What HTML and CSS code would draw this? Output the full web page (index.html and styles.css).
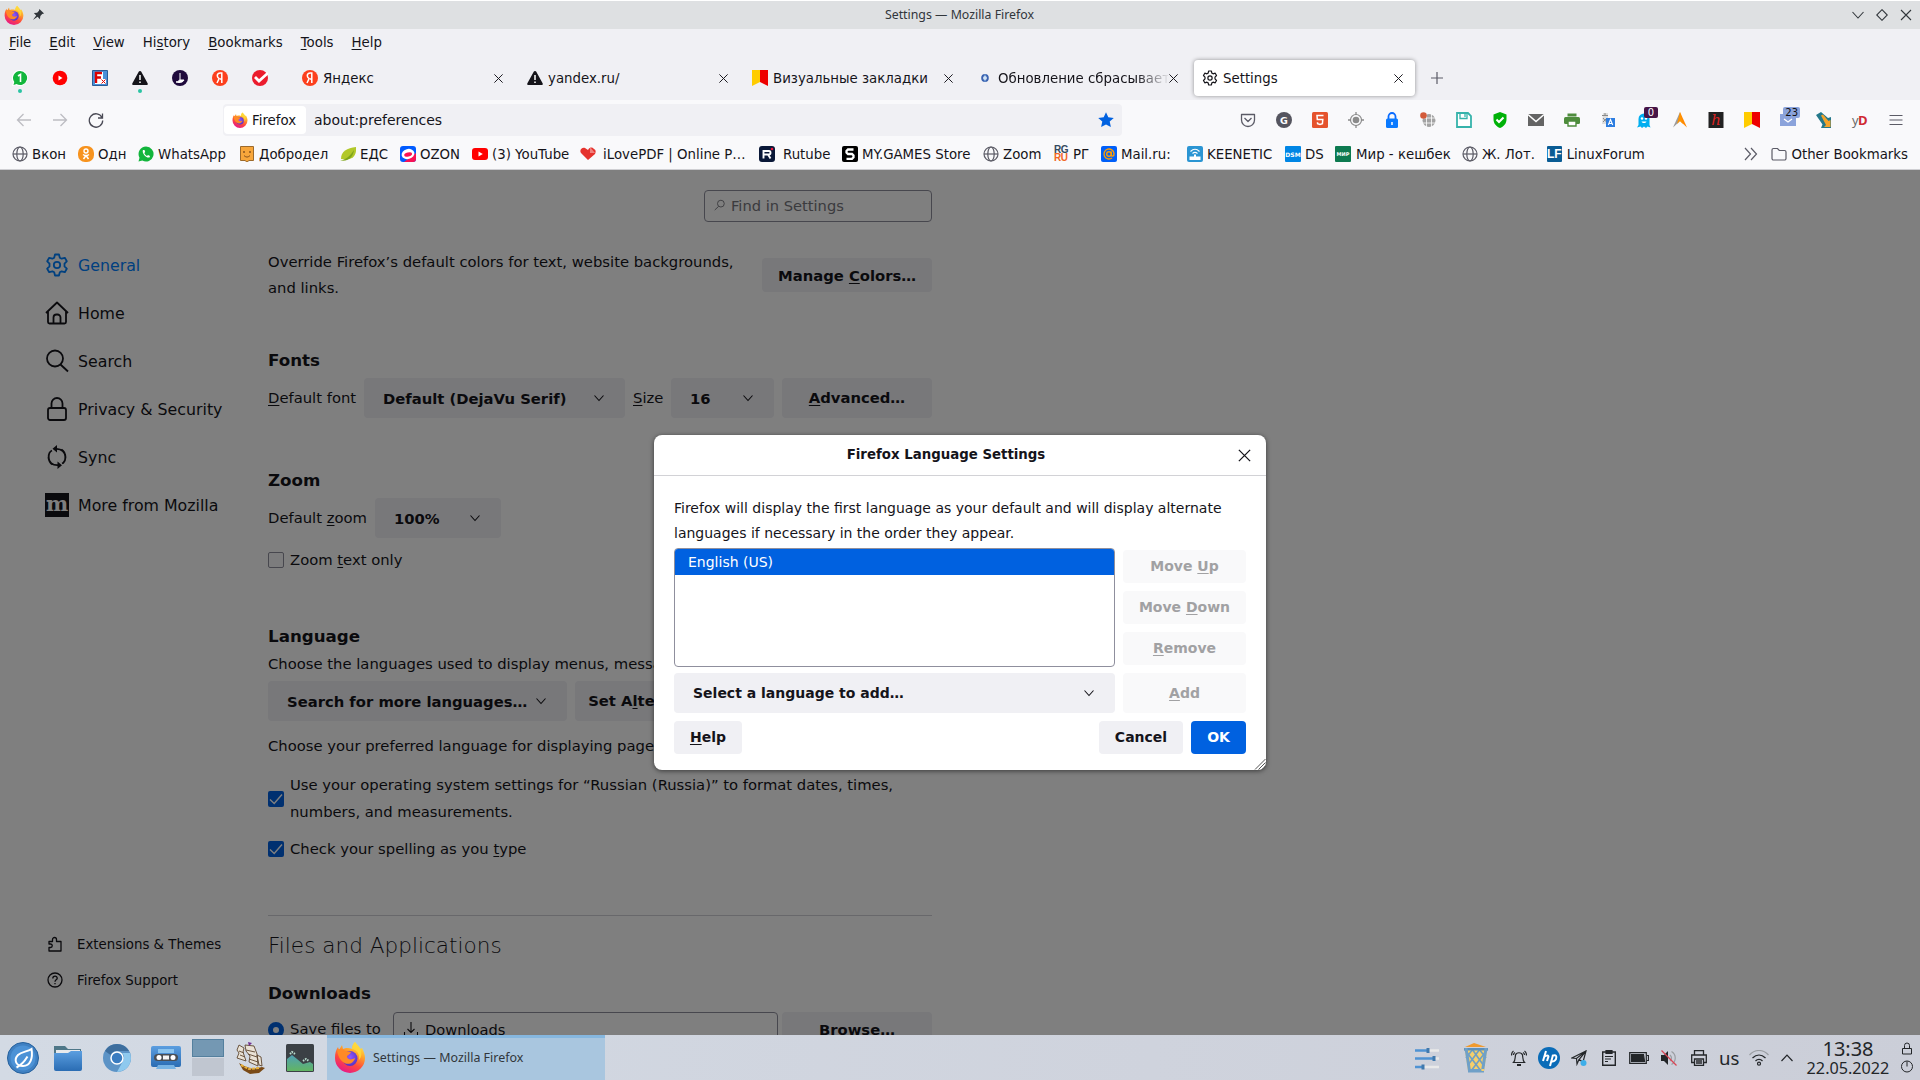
FILE: index.html
```html
<!DOCTYPE html>
<html lang="en">
<head>
<meta charset="utf-8">
<title>Settings — Mozilla Firefox</title>
<link rel="stylesheet" href="styles.css">
</head>
<body>
<svg class="defs" width="0" height="0">
  <defs>
    <linearGradient id="flame" x1="0.8" y1="0" x2="0.3" y2="1"><stop offset="0" stop-color="#fff44f"/><stop offset=".35" stop-color="#ffa22a"/><stop offset=".65" stop-color="#ff4a3d"/><stop offset="1" stop-color="#e5158c"/></linearGradient>
    <radialGradient id="globe" cx=".5" cy=".4" r=".7"><stop offset="0" stop-color="#9059ff"/><stop offset="1" stop-color="#4b2bb8"/></radialGradient>
    <linearGradient id="blue" x1="0" y1="0" x2="0" y2="1"><stop offset="0" stop-color="#5b9ee0"/><stop offset="1" stop-color="#2a6cb3"/></linearGradient>
    <linearGradient id="green" x1="0" y1="0" x2="0" y2="1"><stop offset="0" stop-color="#4f9fb5"/><stop offset="1" stop-color="#62b562"/></linearGradient>
    <symbol id="fx" viewBox="0 0 32 32">
      <path d="M21 1c2 3 4 4 5 7l2-1c2 4 3 7 3 10a15 15 0 0 1-30 0C1 12 2 9 4 6l1 3 3-5 1 4 3-1c3 0 5 0 6 1 0-3 1-5 3-7z" fill="url(#flame)"/>
      <circle cx="16" cy="17.500" r="7.500" fill="url(#globe)"/>
      <path d="M3 9c3-2 6-1 8 1l6 1c-1 3-4 3-4 5 1 3 5 3 8 1-1 5-7 8-12 4C5 18 4 14 3 9z" fill="#ff8a26"/>
      <path d="M18 8c5 1 8 5 7 11 3-3 3-8 1-12l-5-6c-2 2-3 4-3 7z" fill="#ffd83a" opacity=".85"/>
    </symbol>
    <symbol id="x" viewBox="0 0 12 12"><path d="M1.500 1.500l9 9M10.500 1.500l-9 9" fill="none" stroke="currentColor" stroke-width="1.050"/></symbol>
    <symbol id="chev" viewBox="0 0 12 12"><path d="M1.500 3.500L6 8.500l4.500-5" fill="none" stroke="currentColor" stroke-width="1.100"/></symbol>
    <symbol id="world" viewBox="0 0 16 16"><g fill="none" stroke="#5b5b66" stroke-width="1.200"><circle cx="8" cy="8" r="7"/><ellipse cx="8" cy="8" rx="3.200" ry="7"/><path d="M1 8h14"/></g></symbol>
    <symbol id="ya" viewBox="0 0 16 16"><circle cx="8" cy="8" r="8" fill="#fc3f1d"/><path d="M9.800 13V3H8.300C6.500 3 5.300 4.200 5.300 5.800c0 1.300.6 2 1.800 2.900L5 13M9.800 9H8" fill="none" stroke="#fff" stroke-width="1.500"/></symbol>
    <symbol id="warn" viewBox="0 0 16 16"><path d="M8 1c.7 0 1 .3 1.300.8l6.300 11.400c.6 1-.1 1.800-1 1.800H1.400c-.9 0-1.600-.8-1-1.800L6.700 1.800C7 1.300 7.300 1 8 1z" fill="#15141a"/><path d="M8 5v5M8 11.500v1.500" stroke="#fff" stroke-width="1.500"/></symbol>
    <symbol id="flag" viewBox="0 0 16 16"><path d="M0 0h8v12L0 16z" fill="#fc0"/><path d="M8 0h8v16l-8-4z" fill="#e00"/></symbol>
    <symbol id="gear" viewBox="0 0 24 24"><g fill="none" stroke="currentColor" stroke-width="1.800" stroke-linejoin="round"><path d="M10 1.500h4l.8 3.200 1.800 1 3.200-.9 2 3.500-2.300 2.300v2.800l2.300 2.300-2 3.500-3.200-.9-1.800 1-.8 3.200h-4l-.8-3.200-1.800-1-3.200.9-2-3.500 2.300-2.300v-2.800L2.200 8.300l2-3.500 3.200.9 1.800-1z"/><circle cx="12" cy="12" r="3.200"/></g></symbol>
    <symbol id="check" viewBox="0 0 16 16"><path d="M2 8.500l4.200 4L14 3.500" fill="none" stroke="#fff" stroke-width="1.400"/></symbol>
  </defs>
</svg>

<header class="titlebar">
  <svg class="i20"><use href="#fx"/></svg>
  <svg class="pin" viewBox="0 0 14 14"><path d="M8 1l5 5-2 .5-2 2L8.500 12 6 9.500 1 13l3.500-5L2 5.500l3.500-.5 2-2z" fill="#31363b"/></svg>
  <span class="win-title">Settings — Mozilla Firefox</span>
  <div class="win-buttons">
    <svg viewBox="0 0 12 12"><path d="M.5 3L6 9l5.500-6"/></svg>
    <svg viewBox="0 0 12 12"><path d="M6 .7L11.300 6 6 11.300.7 6z"/></svg>
    <svg viewBox="0 0 12 12"><path d="M1 1l10 10M11 1L1 11"/></svg>
  </div>
</header>

<nav class="menubar">
  <span><u>F</u>ile</span><span><u>E</u>dit</span><span><u>V</u>iew</span><span>Hi<u>s</u>tory</span><span><u>B</u>ookmarks</span><span><u>T</u>ools</span><span><u>H</u>elp</span>
</nav>

<div class="tabs">
  <div class="pins">
    <div class="pinned dot"><svg viewBox="0 0 16 16"><path d="M8 0a8 8 0 1 1-4 15L0 16l1-4A8 8 0 0 1 8 0z" fill="#fff"/><path d="M8 1a7 7 0 1 1-3.500 13L1.500 15l.8-3A7 7 0 0 1 8 1z" fill="#12b63c"/><path d="M6 6l2.500-1.500V12" fill="none" stroke="#fff" stroke-width="1.600"/></svg></div>
    <div class="pinned"><svg viewBox="0 0 16 16"><circle cx="8" cy="8" r="7.300" fill="#f00"/><path d="M6.500 5.500v5L10.500 8z" fill="#fff"/></svg></div>
    <div class="pinned"><svg viewBox="0 0 16 16"><path d="M.5.500h15v15H.5z" fill="#4a90d9" stroke="#2a5c96"/><path d="M3 2h8v12H3z" fill="#fff"/><path d="M4 13V3h6M4 7.500h5" fill="none" stroke="#d00" stroke-width="2.400"/><path d="M9 9h5v5H9z" fill="#fff"/><path d="M9.500 9.500l4 4M13.500 9.500l-4 4" stroke="#d00"/></svg></div>
    <div class="pinned dot"><svg><use href="#warn"/></svg></div>
    <div class="pinned"><svg viewBox="0 0 16 16"><circle cx="8" cy="8" r="8" fill="#1f0a3c"/><path d="M8 3v7M4 12c2 0 3-2 4-2h4c-1 2-3 2.500-5 2.500z" fill="#fff" stroke="#fff"/></svg></div>
    <div class="pinned"><svg><use href="#ya"/></svg></div>
    <div class="pinned"><svg viewBox="0 0 16 16"><circle cx="8" cy="8" r="8" fill="#eb1c2d"/><path d="M3 7l4 4 9-8" fill="none" stroke="#fff" stroke-width="2.800"/></svg></div>
  </div>
  <div class="tab"><svg class="i16"><use href="#ya"/></svg><span>Яндекс</span><svg class="close"><use href="#x"/></svg></div>
  <div class="tab"><svg class="i16"><use href="#warn"/></svg><span>yandex.ru/</span><svg class="close"><use href="#x"/></svg></div>
  <div class="tab"><svg class="i16"><use href="#flag"/></svg><span>Визуальные закладки</span><svg class="close"><use href="#x"/></svg></div>
  <div class="tab"><svg class="i16" viewBox="0 0 16 16"><ellipse cx="8" cy="8" rx="2.800" ry="3" fill="#fff" stroke="#3a62b0" stroke-width="2"/><path d="M8 4.500v7" stroke="#9cc8ee"/></svg><span class="fade">Обновление сбрасывает</span><svg class="close"><use href="#x"/></svg></div>
  <div class="tab active"><svg class="i16"><use href="#gear"/></svg><span>Settings</span><svg class="close"><use href="#x"/></svg></div>
  <svg class="plus" viewBox="0 0 12 12"><path d="M6 0v12M0 6h12" stroke="#5b5b66" stroke-width="1.200"/></svg>
</div>

<div class="navbar">
  <div class="nav-buttons">
    <svg class="dim" viewBox="0 0 16 16"><path d="M15 8H1.500M7.500 2l-6 6 6 6"/></svg>
    <svg class="dim" viewBox="0 0 16 16"><path d="M1 8h13.500M8.500 2l6 6-6 6"/></svg>
    <svg viewBox="0 0 16 16"><path d="M14 5.500A6.700 6.700 0 1 0 14.700 8.500M14.500 1.500v4.500H10"/></svg>
  </div>
  <div class="urlbar">
    <div class="identity"><svg class="i16"><use href="#fx"/></svg>Firefox</div>
    <span class="url">about:preferences</span>
    <svg class="star" viewBox="0 0 16 16"><path d="M8 .3l2.300 5 5.500.6-4.100 3.700 1.200 5.500L8 12.400l-4.900 2.700 1.200-5.500L.2 5.900l5.500-.6z" fill="#0061e0"/></svg>
  </div>
  <div class="ext">
    <svg viewBox="0 0 16 16"><path d="M1.500 2.500h13V8a6.500 6.500 0 0 1-13 0zM4.500 6L8 9.500 11.500 6" fill="none" stroke="#5b5b66" stroke-width="1.300" stroke-linejoin="round"/></svg>
    <svg viewBox="0 0 16 16"><circle cx="8" cy="8" r="8" fill="#55555f"/><text x="8" y="11.500" class="g-letter">G</text></svg>
    <svg viewBox="0 0 16 16"><rect width="16" height="16" rx="1.500" fill="#e5532d"/><path d="M11.500 3.500H5l.3 4h5.500l-.4 4.200-2.400.8-2.400-.8-.1-1.500" fill="none" stroke="#fff" stroke-width="1.500"/></svg>
    <svg viewBox="0 0 16 16"><circle cx="8" cy="8" r="5.500" fill="none" stroke="#8b8b8b" stroke-width="1.200"/><circle cx="8" cy="8" r="3.300" fill="#8b8b8b"/><path d="M8 0v3M8 13v3M0 8h3M13 8h3" stroke="#8b8b8b" stroke-width="1.300"/></svg>
    <svg viewBox="0 0 16 16"><path d="M4.500 8V4.500a3.500 3.500 0 0 1 7 0V8" fill="none" stroke="#0a6cff" stroke-width="1.800"/><rect x="2" y="6.500" width="12" height="9.500" rx="1.500" fill="#0a7aff"/><path d="M8 10v3" stroke="#fff" stroke-width="1.500"/></svg>
    <svg viewBox="0 0 16 16"><circle cx="9" cy="8.500" r="6.500" fill="#a3a3a3"/><path d="M2 6h14M2 11h14M6.500 2v13M11.500 2v13" stroke="#fff" stroke-width=".8"/><circle cx="3.500" cy="3.500" r="3.300" fill="#d35b3a"/></svg>
    <svg viewBox="0 0 16 16"><path d="M1 1h11l3 3v11H1z" fill="#fff" stroke="#36b3ab" stroke-width="1.800"/><path d="M4 1v5.500h7V1M9 2v3" fill="none" stroke="#36b3ab" stroke-width="1.300"/></svg>
    <svg viewBox="0 0 16 16"><path d="M8 0l6.500 2.500V7c0 5-3 7.500-6.500 9-3.500-1.500-6.500-4-6.500-9V2.500z" fill="#00b208"/><path d="M4.500 7.500L7 10l4.500-4.500" fill="none" stroke="#fff" stroke-width="2"/></svg>
    <svg viewBox="0 0 16 16"><path d="M0 2h16v12H0z" fill="#646464"/><path d="M0 2.500l8 7 8-7" fill="none" stroke="#fff" stroke-width="1.500"/></svg>
    <svg viewBox="0 0 16 16"><path d="M3.500 1.500h9v3h-9z" fill="#4e8c3c"/><rect y="5" width="16" height="7" rx="1.500" fill="#4e8c3c"/><path d="M4 9h8v5H4z" fill="#fff" stroke="#4e8c3c" stroke-width="1.400"/></svg>
    <svg viewBox="0 0 16 16"><path d="M3 1h5v11H2z" fill="#ddd"/><path d="M2 3.500h6M5 1v3M3 6l3.500 4M7 6l-4 4" stroke="#888" stroke-width="1"/><path d="M6 6h9v9H6z" fill="#2d7de0"/><path d="M8.300 13l2.200-5.500 2.200 5.500M9 11.500h3" fill="none" stroke="#fff" stroke-width="1.100"/></svg>
    <span class="badged"><svg viewBox="0 0 16 16"><path d="M2.500 7a5.500 5.500 0 0 1 11 0v6l1 2.500-3-1L10 16l-2-1.500L6 16l-1.500-1.500-3.500 1 1.500-2.500z" fill="#00aef0"/><circle cx="6" cy="6.500" r="1.200" fill="#fff"/><circle cx="10" cy="6.500" r="1.200" fill="#fff"/><path d="M5.500 9.500c1 2 4 2 5 0" fill="#fff"/></svg><b class="badge plum">0</b></span>
    <svg viewBox="0 0 16 16"><path d="M8 0l7 15.500-7-6.500z" fill="#f80"/><path d="M8 0L1 15.500 8 9z" fill="#9b9b9b"/><path d="M8 0l-3 12 3-3 3 3z" fill="#ff9400"/></svg>
    <svg viewBox="0 0 16 16"><path d="M.5 0h15v16H.5z" fill="#222"/><text x="8" y="13" class="h-letter">h</text></svg>
    <svg><use href="#flag"/></svg>
    <span class="badged"><svg viewBox="0 0 16 16"><path d="M0 2h16v12H0z" fill="#8ba3db"/><path d="M4 7l4 3 4-3" fill="none" stroke="#fff" stroke-width="1.300"/></svg><b class="badge sky">23</b></span>
    <svg viewBox="0 0 16 16"><path d="M0 3l5-3 7 6 3-1v11H5l1.500-3.500z" fill="#24788a"/><path d="M5 3.500l2-1 5.500 6.500 2-1v7H8l2-2z" fill="#f3a32a"/></svg>
    <span class="yd">y<b>D</b></span>
    <svg viewBox="0 0 16 16"><path d="M1.500 3.500h13M1.500 8h13M1.500 12.500h13" stroke="#5b5b66" stroke-width="1.200"/></svg>
  </div>
</div>

<div class="bookmarks">
  <div class="bm"><svg><use href="#world"/></svg>Вкон</div>
  <div class="bm"><svg viewBox="0 0 16 16"><rect width="16" height="16" rx="7" fill="#f7931e"/><circle cx="8" cy="5" r="2" fill="none" stroke="#fff" stroke-width="1.400"/><path d="M5 8.500c2 1.500 4 1.500 6 0M8 9.500L5.500 13M8 9.500l2.500 3.500" fill="none" stroke="#fff" stroke-width="1.500"/></svg>Одн</div>
  <div class="bm"><svg viewBox="0 0 16 16"><path d="M8 .5a7.500 7.500 0 1 1-3.700 14L.5 15.500l1-3.800A7.500 7.500 0 0 1 8 .5z" fill="#12b53c"/><path d="M5 4c-1.500 3 3 8.500 6.500 7.500l.5-1.500-2-1-1 1C8 9.500 6.500 8 6.300 7l.9-1-.7-2z" fill="#fff"/></svg>WhatsApp</div>
  <div class="bm"><svg viewBox="0 0 16 16"><path d="M1.500.500h13v14H10l-2 1.500-2-1.500H1.500z" fill="#f7a63b" stroke="#9c6a2c"/><circle cx="5" cy="6" r=".9" fill="#7d4b1a"/><circle cx="11" cy="6" r=".9" fill="#7d4b1a"/><path d="M5 9.500c2 2 4 2 6 0" fill="none" stroke="#7d4b1a"/></svg>Добродел</div>
  <div class="bm"><svg viewBox="0 0 16 16"><path d="M16 1c1 10-5 14-15 12C1 5 7 2 16 1z" fill="#b2c82a"/><path d="M0 15c7-2 10-5 14-11C13 12 8 15 0 15z" fill="#7fa51c"/></svg>ЕДС</div>
  <div class="bm"><svg viewBox="0 0 16 16"><rect width="16" height="16" rx="3" fill="#005bff"/><path d="M16 7v6a3 3 0 0 1-3 3H4z" fill="#f91155"/><ellipse cx="8" cy="8" rx="6.500" ry="5" fill="#fff" transform="rotate(-15 8 8)"/><ellipse cx="8" cy="8.500" rx="4" ry="2" fill="#f91155" transform="rotate(-15 8 8)"/></svg>OZON</div>
  <div class="bm"><svg viewBox="0 0 16 16"><rect y="2" width="16" height="12" rx="3" fill="#f00"/><path d="M6.500 5.500v5L10.800 8z" fill="#fff"/></svg>(3) YouTube</div>
  <div class="bm"><svg viewBox="0 0 16 16"><path d="M8 14L1 7c-2-3 1-6 4-5l3 2c2-3 4-3 6-1 2 1 2 3 1 5z" fill="#e5322d"/><path d="M10 1l5 6h-5z" fill="#f1807d"/></svg>iLovePDF | Online P…</div>
  <div class="bm"><svg viewBox="0 0 16 16"><rect width="16" height="16" rx="3" fill="#0a1838"/><path d="M4.500 12.500V5h5.500c2 0 2 3.500 0 3.500H5M9 8.500l2.500 4" fill="none" stroke="#fff" stroke-width="1.900"/><circle cx="13" cy="3" r="1.300" fill="#ed143b"/></svg>Rutube</div>
  <div class="bm"><svg viewBox="0 0 16 16"><rect width="16" height="16" rx="2" fill="#000"/><path d="M11.500 3.500H6L4.500 5v1.500L6 8h4l1.500 1.500v1.800L10 12.800H4.500" fill="none" stroke="#fff" stroke-width="2.300"/></svg>MY.GAMES Store</div>
  <div class="bm"><svg><use href="#world"/></svg>Zoom</div>
  <div class="bm"><span class="rg"><b>RG</b><b>RU</b></span>РГ</div>
  <div class="bm"><svg viewBox="0 0 16 16"><rect width="16" height="16" rx="2" fill="#005ff9"/><circle cx="8" cy="8" r="2.300" fill="none" stroke="#ff9e00" stroke-width="1.400"/><path d="M10.300 5.500V9c0 1.800 3 1.500 2.700-1.500A5 5 0 1 0 11 12" fill="none" stroke="#ff9e00" stroke-width="1.400"/></svg>Mail.ru:</div>
  <div class="bm"><svg viewBox="0 0 16 16"><rect width="16" height="16" rx="2" fill="#2b95d3"/><path d="M2.500 10.500h11V14h-11z" fill="#fff"/><path d="M3.500 5.500c3-3 6-3 9 0M5.500 7.500c2-1.800 3-1.800 5 0" stroke="#fff" fill="none" stroke-width="1.100"/><path d="M7 8.500h2v3H7z" fill="#fff"/></svg>KEENETIC</div>
  <div class="bm"><span class="dsm">DSM</span>DS</div>
  <div class="bm"><span class="mir">МИР</span>Мир - кешбек</div>
  <div class="bm"><svg><use href="#world"/></svg>Ж. Лот.</div>
  <div class="bm"><span class="lf">LF</span>LinuxForum</div>
  <div class="bm-end">
    <svg class="more" viewBox="0 0 14 14"><path d="M1 1l5.500 6L1 13M7 1l5.500 6L7 13" fill="none" stroke="#5b5b66" stroke-width="1.200"/></svg>
    <svg viewBox="0 0 16 16"><path d="M1 4a1.500 1.500 0 0 1 1.500-1.500h4l1.800 2h5.200A1.500 1.500 0 0 1 15 6v6.500a1.500 1.500 0 0 1-1.500 1.500h-11A1.500 1.500 0 0 1 1 12.500z" fill="none" stroke="#5b5b66" stroke-width="1.200"/></svg>
    <span>Other Bookmarks</span>
  </div>
</div>

<div class="page">
  <aside class="side">
    <div class="cat sel"><svg><use href="#gear"/></svg>General</div>
    <div class="cat"><svg viewBox="0 0 24 24"><path d="M1 12L12 1.500 23 12M3 10.500V21a1.500 1.500 0 0 0 1.500 1.500h15A1.500 1.500 0 0 0 21 21V10.500M8.500 22.500v-6a3 3 0 0 1 3-3h1a3 3 0 0 1 3 3v6" /></svg>Home</div>
    <div class="cat"><svg viewBox="0 0 24 24"><circle cx="10" cy="9.500" r="8"/><path d="M15.500 15.500L23 22.500"/></svg>Search</div>
    <div class="cat"><svg viewBox="0 0 24 24"><rect x="3" y="11" width="18" height="12" rx="2"/><path d="M6.500 11V6.500a5.500 5.500 0 0 1 11 0V11"/></svg>Privacy &amp; Security</div>
    <div class="cat"><svg viewBox="0 0 24 24"><path d="M7.500 19.500C2.500 16.500 2.500 7.500 7 5.500M16.500 4.500c5 3 5 12 .5 14M11 3.800c5.500-.3 9.500 3.500 9.500 8.500 0 2.500-1 4.500-2.500 6M13 20.200c-5.500.3-9.500-3.200-9.500-8.200"/><path class="solid" d="M12 0v7.500L7.500 3.800zM12.500 16.500V24l4.500-3.800z"/></svg>Sync</div>
    <div class="cat"><span class="moz">m</span>More from Mozilla</div>
    <div class="foot">
      <div><svg viewBox="0 0 16 16"><path d="M2 5.500h3.500v-2a2 2 0 0 1 4 0v2H14v9.500H2v-3.500h1.500a1.700 1.700 0 0 0 0-3.500H2z" stroke-linejoin="round"/></svg>Extensions &amp; Themes</div>
      <div><svg viewBox="0 0 16 16"><circle cx="8" cy="8" r="7"/><path d="M5.800 6.500c0-3 4.600-3 4.400-.2C10 8 8 7.800 8 9.800M8 11v1.300"/></svg>Firefox Support</div>
    </div>
  </aside>
  <main class="main">
    <div class="find"><svg viewBox="0 0 12 12"><circle cx="7.500" cy="4.500" r="3.700"/><path d="M5 7.500L.8 11.500"/></svg>Find in Settings</div>
    <div class="row override"><p>Override Firefox’s default colors for text, website backgrounds, and links.</p><div class="btn">Manage&nbsp;<u>C</u>olors…</div></div>
    <h2 class="h-fonts">Fonts</h2>
    <div class="row"><span class="lbl"><u>D</u>efault font</span><div class="sel-box w-font">Default (DejaVu Serif)<svg><use href="#chev"/></svg></div><span class="lbl size"><u>S</u>ize</span><div class="sel-box w-size">16<svg><use href="#chev"/></svg></div><div class="btn tall adv"><u>A</u>dvanced…</div></div>
    <h2 class="h-zoom">Zoom</h2>
    <div class="row"><span class="lbl zoomlbl">Default <u>z</u>oom</span><div class="sel-box w-zoom">100%<svg><use href="#chev"/></svg></div></div>
    <div class="chk zoomtext"><i class="box"></i>Zoom <u>t</u>ext only</div>
    <h2 class="h-lang">Language</h2>
    <div class="line l1">Choose the languages used to display menus, messages,</div>
    <div class="row langs"><div class="sel-box w-more">Search for more languages…<svg><use href="#chev"/></svg></div><div class="btn tall alt">Set A<u>l</u>ternatives…</div></div>
    <div class="line l2">Choose your preferred language for displaying pages</div>
    <div class="chk two"><i class="box on"><svg><use href="#check"/></svg></i><p>Use your operating system settings for “Russian (Russia)” to format dates, times, numbers, and measurements.</p></div>
    <div class="chk spell"><i class="box on"><svg><use href="#check"/></svg></i><span>Check your spelling as you <u>t</u>ype</span></div>
    <hr>
    <h1>Files and Applications</h1>
    <h2 class="h-down">Downloads</h2>
    <div class="row save"><i class="radio"></i><span class="lbl">Sa<u>v</u>e files to</span><div class="path"><svg viewBox="0 0 16 16"><path d="M8 1v10M4.500 8L8 11.500 11.500 8M1.500 11v3.500h13V11"/></svg>Downloads</div><div class="btn tall browse">Br<u>o</u>wse…</div></div>
  </main>
  <div class="shade"></div>
  <section class="dialog">
    <header><span>Firefox Language Settings</span><svg><use href="#x"/></svg></header>
    <div class="body">
      <p>Firefox will display the first language as your default and will display alternate languages if necessary in the order they appear.</p>
      <div class="grid">
        <div class="list"><div>English (US)</div></div>
        <div class="stack"><div class="off">Move&nbsp;<u>U</u>p</div><div class="off">Move&nbsp;<u>D</u>own</div><div class="off"><u>R</u>emove</div></div>
        <div class="pick">Select a language to add…<svg><use href="#chev"/></svg></div>
        <div class="off add"><u>A</u>dd</div>
      </div>
      <div class="actions"><div class="b help"><u>H</u>elp</div><div class="b cancel">Cancel</div><div class="b ok">OK</div></div>
    </div>
    <svg class="grip" viewBox="0 0 12 12"><path d="M1 11.500L11.500 1M4.500 11.500l7-7M8 11.500L11.500 8"/></svg>
  </section>
</div>

<footer class="panel">
  <div class="launchers">
    <svg class="a1" viewBox="0 0 32 32"><circle cx="16" cy="16" r="15.500" fill="#3f80c2" stroke="#26619d"/><circle cx="16" cy="16" r="12.500" fill="#4c92d6"/><path d="M24.500 7c1.500 9-1 17-8.500 17-8 0-9-7-5-11 3.500-3.500 9-3 13.500-6zM9.500 25.500c4-2 8-6 11-11" fill="none" stroke="#fff" stroke-width="2"/></svg>
    <svg class="a2" viewBox="0 0 28 28"><path d="M0 2h11l3 3h13v6H0z" fill="#4e7788"/><path d="M2 6h24v6H2z" fill="#e8eaec"/><path d="M0 9h14l3-2h11v18a2 2 0 0 1-2 2H2a2 2 0 0 1-2-2z" fill="url(#blue)"/></svg>
    <svg class="a3" viewBox="0 0 28 28"><circle cx="14" cy="14" r="14" fill="#5c93c6"/><path d="M14 0a14 14 0 0 1 12 7H14a7 7 0 0 0-6.500 4L2 7a14 14 0 0 1 12-7z" fill="#3d6e9e"/><path d="M27 9a14 14 0 0 1-13 19l6-11c2-3 1-6-1-8z" fill="#8ec9ee"/><circle cx="14" cy="14" r="6" fill="#3a7cc0" stroke="#fff" stroke-width="1.500"/></svg>
    <svg class="a4" viewBox="0 0 30 24"><rect width="30" height="21" rx="2" fill="url(#blue)"/><path d="M7 3h16v4H7z" fill="#8ac4ef"/><rect x="3" y="8" width="24" height="7" rx="3.500" fill="#4a4f55"/><circle cx="8" cy="11.500" r="2.500" fill="#fff"/><circle cx="22" cy="11.500" r="2.500" fill="#fff"/><path d="M12 9.500h6v4h-6z" fill="#f4f4f4"/><path d="M7 19h16l2 4H5z" fill="#77b3e4"/></svg>
    <div class="pager"><i></i><i></i></div>
    <svg class="a5" viewBox="0 0 30 32"><path d="M3 21l5 3 9 3 9-2 3 1-6 5-9 1-7-4z" fill="#7a4a17"/><path d="M5 23l8 4 10-1" fill="none" stroke="#e8b13a" stroke-width="2" stroke-dasharray="3 1"/><path d="M3 3l5 3-1 4 3 9-6-2-3-1 2-5-2-3zM9 3l9 1 3 8 1 12-9-4 1-6-4-5zM21 13l4 2 1 9-3-1z" fill="#e9e2d6" stroke="#5d4630" stroke-width=".9"/><path d="M3 9l5 2M10 8l9 2M12 12l9 3M13 17l9 3M4 13l5 2" stroke="#6b553f" fill="none"/><path d="M12 0l4 1-3 3z" fill="#703090"/></svg>
    <svg class="a6" viewBox="0 0 28 28"><rect width="28" height="28" rx="1.500" fill="#3b4045"/><path d="M1 15l5-4 5 4 6 5 7-2 3 2v7H1z" fill="url(#green)"/><path d="M4 10l2-2 3 2M17 17l3-2 3 2" stroke="#b9dccf" stroke-dasharray="1.500 1" fill="none" stroke-width="2"/></svg>
  </div>
  <div class="task"><svg><use href="#fx"/></svg>Settings — Mozilla Firefox</div>
  <div class="tray">
    <svg class="t-slide" viewBox="0 0 24 24"><path d="M14 4.500h10M19 12.500h5M8 21h16" stroke="#e9e9e9" stroke-width="2.500"/><path d="M0 4.500h14M0 12.500h20M0 21h8" stroke="#4f93d3" stroke-width="2.500"/><path d="M13 2v5M19 10v5M8 18.500v5" stroke="#4079ad" stroke-width="3"/></svg>
    <svg class="t-bin" viewBox="0 0 26 30"><path d="M2 4l9-4 12 4z" fill="#f09a2e"/><path d="M1.500 5h23L21 28H5z" fill="#f6cf6a"/><path d="M2 7l16 21M9 6l12 17M16 6l7 9M24 7L8 28M17 6L5 22M10 6l-7 9" stroke="#6f9fc4" stroke-width="1.600"/><path d="M1 5h24v2.500H1z" fill="#5b90bb"/><path d="M1.500 5h3L8 28H5zM24.500 5h-3L18 28h3zM5 26h16v3.500H5z" fill="#6fa0c8"/></svg>
    <svg class="t-bell" viewBox="0 0 16 16"><path d="M2.500 12.500c2-2 1.500-5 2-7.500C5.200 2 10.800 2 11.500 5c.5 2.500 0 5.500 2 7.500zM2.500 1C.8 2 .5 4 .5 5.500M13.500 1c1.700 1 2 3 2 4.500M4 2.500C3 3 2.500 4 2.500 5M12 2.500c1 .5 1.500 1.500 1.500 2.500"/><path d="M6 15h4" stroke-width="2"/></svg>
    <svg class="t-hp" viewBox="0 0 22 22"><circle cx="11" cy="11" r="11" fill="#0a6cb8"/><path d="M8 4L5 14M6 10c4-3 5-1 4 1l-1 3M15 8l-3 11M14 9c4-2 5 0 4 3-1 2-3 3-5 2" fill="none" stroke="#fff" stroke-width="2"/></svg>
    <svg class="t-tg" viewBox="0 0 16 16"><path d="M.8 8L15 1l-3 11-4-2.500L15 1 5.500 8.500zM5.500 8.500L6 14l2-4.500"/><circle cx="12.500" cy="13" r="3" fill="#3daee9" stroke="none"/></svg>
    <svg class="t-clip" viewBox="0 0 14 16"><path d="M.7 2h12.600v13.300H.7z" stroke-width="1.400"/><path d="M4 .5h6v3H4z" fill="#232629"/><path d="M3 6.500h8M3 9h6M3 11.500h3"/></svg>
    <svg class="t-bat" viewBox="0 0 20 12"><path d="M.7.700h16.600v10.600H.7zM18 3.500h1.500v5H18"/><path d="M2.500 2.500h12L15.500 9.500h-13z" fill="#232629"/></svg>
    <svg class="t-mute" viewBox="0 0 16 16"><path d="M0 5h3l4-4v14l-4-4H0z" fill="#232629" stroke="none"/><path d="M9 5c2 2 2 4 0 6M10.500 1.500c5 3 5 10 0 13" stroke="#9a9da2"/><path d="M.5.500l15 15" stroke="#da4453" stroke-width="1.300"/></svg>
    <svg class="t-print" viewBox="0 0 16 16"><path d="M3.500 5V.700h9V5M3.500 12.500H.7V5h14.600v7.500h-2.800M3.500 9h9v6.300h-9zM5 11h6M5 13h6" stroke-width="1.300"/></svg>
    <span class="kb">us</span>
    <svg class="t-wifi" viewBox="0 0 20 16"><path d="M.5 5C6-1 14-1 19.500 5" stroke="#9a9da2"/><path d="M3.500 8c4-4 9-4 13 0M6.500 11c2-2.200 5-2.200 7 0"/><circle cx="10" cy="13.700" r="1.500"/></svg>
    <svg class="t-up" viewBox="0 0 12 8"><path d="M.5 7L6 1.200 11.500 7"/></svg>
    <div class="clock"><span class="time">13:38</span><span class="date">22.05.2022</span></div>
    <div class="power"><svg viewBox="0 0 12 12"><path d="M1.500 6h9v5.500h-9zM3.500 6V3a2.500 2.500 0 0 1 5 0v3"/></svg><svg viewBox="0 0 12 12"><circle cx="6" cy="6" r="5.500"/><path d="M6 1v5"/></svg></div>
  </div>
</footer>
</body>
</html>
```
FILE: styles.css
```css
* { box-sizing: border-box; }
html, body { margin: 0; height: 100%; }
body {
  width: 1920px; height: 1080px; overflow: hidden;
  display: flex; flex-direction: column;
  font: 13.33px "DejaVu Sans", "Noto Sans", sans-serif;
  color: #15141a; background: #fff;
}
svg { display: block; flex: none; }
u { text-decoration: underline; text-decoration-thickness: 1px; text-underline-offset: 2px; text-decoration-skip-ink: none; }
p, h1, h2 { margin: 0; }
.defs { position: absolute; }
.i16 { width: 16px; height: 16px; }
.i20 { width: 20px; height: 20px; }

.titlebar { flex: none; height: 29px; background: #dee0e2; border-top: 1px solid #fff; display: flex; align-items: center; padding: 0 8px 0 4px; font-family: "Noto Sans", sans-serif; font-size: 12.35px; color: #31363b; }
.titlebar svg { margin-top: -1px; }
.pin { width: 13px; height: 13px; margin-left: 8px; }
.win-title { flex: 1; text-align: center; padding: 0 0 2px 22px; }
.win-buttons { display: flex; gap: 12px; }
.win-buttons svg { width: 12px; height: 12px; fill: none; stroke: #31363b; stroke-width: 1.1; }

.menubar { flex: none; height: 26px; background: #f0f0f4; display: flex; align-items: center; gap: 18px; padding-left: 9px; }

.tabs { flex: none; height: 45px; background: #f0f0f4; display: flex; align-items: center; padding-top: 1px; }
.pins { display: flex; width: 292px; }
.pinned { width: 40px; height: 36px; display: flex; align-items: center; justify-content: center; position: relative; }
.pinned svg { width: 16px; height: 16px; }
.pinned.dot::after { content: ""; position: absolute; left: 18px; bottom: 3px; width: 4px; height: 4px; border-radius: 2px; background: #2ac3a2; }
.tab { flex: none; width: 221px; height: 36px; margin: 0 2px; padding: 0 11px 0 8px; display: flex; align-items: center; border-radius: 4px; white-space: nowrap; }
.tab span { flex: 1; min-width: 0; margin-left: 5px; overflow: hidden; line-height: 20px; padding-top: 1px; }
.tab .fade { -webkit-mask-image: linear-gradient(90deg, #000 138px, transparent 172px); mask-image: linear-gradient(90deg, #000 138px, transparent 172px); }
.tab .close { width: 11px; height: 11px; }
.tab.active { background: #fff; box-shadow: 0 0 4px rgba(0,0,0,.4); }
.plus { width: 12px; height: 12px; margin-left: 14px; }

.navbar { flex: none; height: 41px; background: #f9f9fb; display: flex; align-items: center; padding-bottom: 1px; }
.nav-buttons { display: flex; gap: 20px; width: 223px; padding-left: 16px; }
.nav-buttons svg { width: 16px; height: 16px; fill: none; stroke: #4a4a55; stroke-width: 1.3; }
.nav-buttons .dim { stroke: #bdbdc2; }
.urlbar { width: 899px; height: 32px; background: #f0f0f4; border-radius: 4px; display: flex; align-items: center; padding: 0 8px 0 1px; }
.identity { width: 82px; height: 28px; background: #fff; border-radius: 4px; display: flex; align-items: center; gap: 4px; padding-left: 8px; }
.url { flex: 1; padding-left: 8px; font-size: 14px; }
.star { width: 16px; height: 16px; }
.ext { margin-left: 108px; flex: 1; display: flex; align-items: center; }
.ext > * { width: 16px; height: 16px; margin: 0 10px; flex: none; }
.badged { position: relative; }
.badged svg { width: 16px; height: 16px; }
.badge { position: absolute; right: -6px; top: -5px; font-size: 10px; font-weight: 400; line-height: 11px; height: 11px; padding: 0 4px; border-radius: 2px; }
.plum { background: #471547; color: #fff; }
.sky { background: #8ba3db; color: #111; padding: 0 2px; right: -4px; }
.g-letter { font: bold 9.500px "DejaVu Sans", sans-serif; fill: #fff; text-anchor: middle; }
.h-letter { font: italic 15px "DejaVu Serif", serif; fill: #d22; text-anchor: middle; }
.yd { font: 13px/16px "Open Sans", sans-serif; color: #666; letter-spacing: -.5px; }
.yd b { color: #d02a32; }

.bookmarks { flex: none; height: 29px; background: #f9f9fb; border-bottom: 1px solid #cfcfd3; display: flex; align-items: center; padding: 0 0 2px 12px; }
.bm { flex: none; display: flex; align-items: center; gap: 4px; white-space: nowrap; width: 66px; }
.bm svg { width: 16px; height: 16px; }
.bm:nth-child(2) { width: 60px; }
.bm:nth-child(3) { width: 101px; }
.bm:nth-child(4) { width: 101px; }
.bm:nth-child(5) { width: 60px; }
.bm:nth-child(6) { width: 72px; }
.bm:nth-child(7) { width: 108px; }
.bm:nth-child(8) { width: 179px; gap: 7px; }
.bm:nth-child(9) { width: 83px; gap: 8px; }
.bm:nth-child(10) { width: 141px; }
.bm:nth-child(11) { width: 71px; }
.bm:nth-child(12) { width: 47px; }
.bm:nth-child(13) { width: 86px; }
.bm:nth-child(14) { width: 98px; }
.bm:nth-child(15) { width: 50px; }
.bm:nth-child(16) { width: 127px; gap: 5px; }
.bm:nth-child(17) { width: 85px; }
.bm:nth-child(18) { gap: 5px; }
.rg { width: 15px; height: 17px; display: flex; flex-direction: column; font: 10px/8px "Liberation Sans", sans-serif; color: #34495e; letter-spacing: -.5px; }
.rg b + b { color: #f26522; }
.dsm, .mir, .lf { width: 16px; height: 16px; display: flex; align-items: center; justify-content: center; font: bold 6px "DejaVu Sans", sans-serif; color: #fff; background: #0086e5; border-radius: 1px; }
.mir { background: #0d7a50; font-size: 5px; }
.lf { background: #0a5c94; font: bold 12px "Liberation Sans", sans-serif; }
.bm-end { flex: 1; display: flex; align-items: center; justify-content: flex-end; gap: 4px; padding-right: 12px; }
.bm-end svg { width: 16px; height: 16px; }
.bm-end .more { width: 14px; height: 14px; margin-right: 9px; }

.page { flex: 1; min-height: 0; position: relative; overflow: hidden; display: flex; background: #fff; font-size: 14.79px; }
.side { width: 268px; padding: 71px 0 0 45px; display: flex; flex-direction: column; }
.cat { height: 48px; display: flex; align-items: center; gap: 9px; font-size: 15.8px; }
.cat svg { width: 24px; height: 24px; fill: none; stroke: currentColor; stroke-width: 1.8; stroke-linejoin: round; }
.cat .solid { fill: currentColor; stroke: none; }
.cat.sel { color: #0080ff; }
.moz { width: 24px; height: 24px; background: #15141a; color: #fff; font: bold 21px/22px "DejaVu Serif", serif; display: flex; justify-content: center; }
.foot { margin-top: 397px; font-size: 13.33px; }
.foot div { height: 36px; display: flex; align-items: center; gap: 14px; padding-left: 2px; }
.foot svg { width: 16px; height: 16px; fill: none; stroke: currentColor; stroke-width: 1.3; }
.main { width: 664px; padding-top: 20px; flex: none; }
.find { width: 228px; height: 32px; margin-left: auto; border: 1px solid #8f8f9d; border-radius: 4px; display: flex; align-items: center; gap: 6px; padding: 0 0 2px 9px; color: #76767d; font-size: 14.67px; }
.find svg { width: 11px; height: 12px; fill: none; stroke: #76767d; }
.row { display: flex; align-items: center; height: 40px; margin-top: 8px; white-space: nowrap; }
.override { height: 52px; margin-top: 27px; }
.override p { width: 494px; padding-right: 16px; line-height: 26px; white-space: normal; }
.btn, .sel-box { height: 34px; background: #f0f0f4; border-radius: 4px; font-weight: bold; display: flex; align-items: center; justify-content: center; }
.override .btn { width: 170px; }
.btn.tall, .sel-box { height: 40px; padding-bottom: 1px; }
.sel-box { justify-content: space-between; padding: 0 20px 0 19px; }
.sel-box svg, .pick svg { width: 12px; height: 12px; }
.lbl { flex: none; padding-bottom: 1px; }
.w-font { width: 261px; margin-left: auto; }
.row .lbl:first-child { width: 96px; }
.row .zoomlbl:first-child { width: 107px; }
.size { width: 30px; margin: 0 8px; }
.w-size { width: 103px; }
.adv { width: 150px; margin-left: 8px; }
.w-zoom { width: 126px; }
h2 { font-size: 16.7px; line-height: 20px; height: 20px; }
.h-fonts { margin-top: 49px; }
.h-zoom { margin-top: 52px; }
.h-lang { margin-top: 56px; }
.h-down { margin-top: 24px; }
.line { height: 20px; line-height: 20px; white-space: nowrap; }
.l1 { margin-top: 8px; }
.langs { margin-top: 7px; }
.w-more { width: 299px; }
.alt { width: 176px; margin-left: 8px; }
.l2 { margin-top: 15px; }
.chk { display: flex; align-items: center; gap: 6px; height: 20px; }
.box { width: 16px; height: 16px; flex: none; border: 1px solid #8f8f9d; border-radius: 2px; background: #f9f9fb; }
.box.on { background: #0061e0; border: 0; }
.box svg { width: 16px; height: 16px; }
.zoomtext { margin-top: 12px; white-space: pre; gap: 0; padding-bottom: 1px; }
.zoomtext .box { margin-right: 6px; }
.two { height: 54px; margin-top: 16px; line-height: 27px; }
.two p { padding-bottom: 2px; }
.spell { margin-top: 13px; }
.spell span { padding-bottom: 1px; }
hr { margin: 56px 0 0; border: 0; height: 1px; background: #d0d0d6; }
h1 { margin-top: 15px; height: 30px; font-size: 21.6px; line-height: 30px; font-weight: 200; }
.h-down { margin-top: 22px; }
.radio { width: 16px; height: 16px; border: 5px solid #0061e0; border-radius: 50%; margin-right: 6px; margin-top: -4px; }
.save { margin-top: 9px; }
.save .lbl { margin-top: -6px; }
.path { width: 385px; height: 40px; margin-left: auto; border: 1px solid #8f8f9d; border-radius: 4px; display: flex; align-items: center; gap: 6px; padding: 0 0 6px 9px; font-size: 14.67px; }
.path svg { width: 16px; height: 16px; fill: none; stroke: #15141a; stroke-width: 1.1; }
.btn.browse { width: 150px; margin-left: 4px; padding-bottom: 6px; }
.shade { position: absolute; inset: 0; background: rgba(0,0,0,.5); }

.dialog { position: absolute; left: 654px; top: 265px; width: 612px; height: 335px; background: #fff; border-radius: 8px; box-shadow: 0 1px 5px rgba(0,0,0,.55); font-size: 14px; }
.dialog header { height: 41px; border-bottom: 1px solid #d2d2d6; display: flex; align-items: center; font-size: 13.33px; font-weight: bold; padding: 0 14px 2px 0; }
.dialog header span { flex: 1; text-align: center; padding-right: 14px; }
.dialog header svg { width: 15px; height: 15px; margin: 3px 0 0 -15px; }
.dialog .body { padding: 20px 20px 0; }
.dialog p { line-height: 25px; height: 50px; }
.grid { margin-top: 2px; display: grid; grid-template-columns: 441px 123px; gap: 6px 8px; }
.list { height: 119px; border: 1px solid #8f8f9d; border-radius: 4px; overflow: hidden; }
.list div { height: 26px; line-height: 26px; padding-left: 13px; background: #0061e0; color: #fff; }
.stack { display: flex; flex-direction: column; gap: 8px; padding-top: 2px; }
.off { height: 33px; border-radius: 4px; background: #f9f9fa; color: #a1a1a3; font-weight: bold; display: flex; align-items: center; justify-content: center; padding-bottom: 2px; }
.off.add { height: 40px; padding-bottom: 0; }
.pick { height: 40px; background: #f0f0f4; border-radius: 4px; font-weight: bold; display: flex; align-items: center; justify-content: space-between; padding: 0 20px 0 19px; }
.actions { margin-top: 8px; display: flex; }
.b { height: 33px; border-radius: 4px; background: #f0f0f4; font-weight: bold; display: flex; align-items: center; justify-content: center; padding-bottom: 2px; }
.help { width: 68px; }
.cancel { width: 84px; margin-left: auto; }
.ok { width: 55px; margin-left: 8px; background: #0061e0; color: #fff; }
.grip { position: absolute; right: 0; bottom: 0; width: 12px; height: 12px; stroke: #555; fill: none; }

.panel { flex: none; height: 45px; background: linear-gradient(90deg, #d3dae4, #cfd3dd 60%, #cbced8); display: flex; font-family: "Noto Sans", sans-serif; color: #232629; position: relative; }
.launchers { width: 327px; display: flex; align-items: center; padding-left: 7px; }
.a1 { width: 32px; height: 32px; }
.a2 { width: 28px; height: 28px; margin-left: 15px; }
.a3 { width: 28px; height: 28px; margin-left: 21px; }
.a4 { width: 30px; height: 24px; margin-left: 20px; }
.pager { width: 32px; margin-left: 11px; display: flex; flex-direction: column; gap: 1px; }
.pager i { height: 18px; background: #c0c6d0; }
.pager i:first-child { background: #7498b3; border: 1px solid #54809e; }
.a5 { width: 30px; height: 32px; margin-left: 12px; }
.a6 { width: 28px; height: 28px; margin-left: 20px; }
.task { width: 278px; background: #a9c6df; border-top: 3px solid #86b7df; display: flex; align-items: center; gap: 7px; padding: 0 0 4px 7px; font-size: 12.45px; color: #31363b; }
.task svg { width: 32px; height: 32px; }
.tray { flex: 1; display: flex; align-items: center; padding-right: 7px; }
.tray svg { fill: none; stroke: #232629; stroke-width: 1.2; }
.tray .t-slide, .tray .t-bin, .tray .t-hp { stroke: none; }
.t-slide { width: 24px; height: 24px; margin-left: 810px; }
.t-bin { width: 26px; height: 30px; margin-left: 24px; }
.t-bell { width: 16px; height: 16px; margin-left: 22px; }
.t-hp { width: 22px; height: 22px; margin-left: 11px; }
.t-tg { width: 16px; height: 16px; margin-left: 11px; }
.t-clip { width: 14px; height: 16px; margin-left: 15px; }
.t-bat { width: 20px; height: 12px; margin-left: 13px; }
.t-mute { width: 16px; height: 16px; margin-left: 12px; }
.t-print { width: 16px; height: 16px; margin-left: 14px; }
.kb { width: 20px; margin-left: 12px; font-size: 18.6px; padding-bottom: 1px; }
.t-wifi { width: 20px; height: 16px; margin-left: 10px; }
.t-up { width: 12px; height: 8px; margin-left: 12px; }
.clock { width: 84px; margin-left: 13px; display: flex; flex-direction: column; align-items: center; }
.time { font-size: 20px; line-height: 20px; }
.date { font-size: 16.2px; line-height: 18px; }
.power { margin-left: 11px; display: flex; flex-direction: column; gap: 5px; }
.power svg { width: 12px; height: 13px; stroke-width: 1; }
```
